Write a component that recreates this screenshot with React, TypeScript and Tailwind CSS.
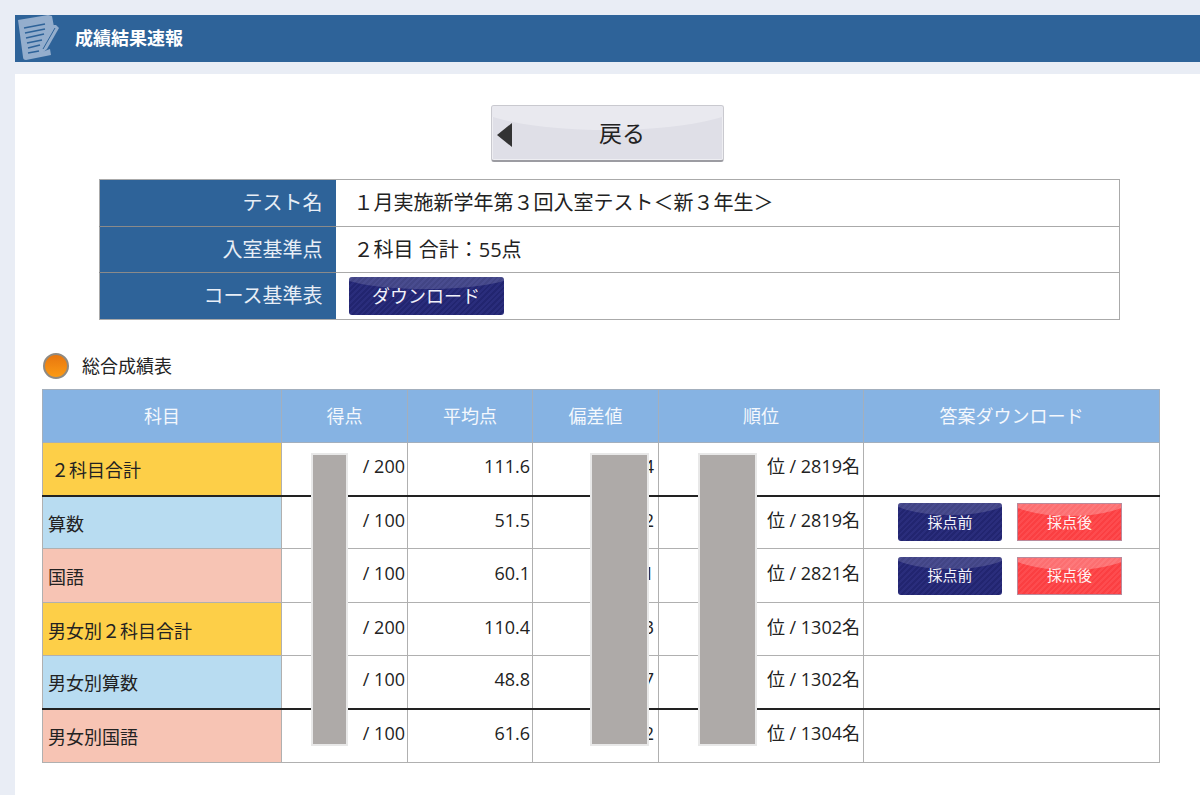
const font = "font-['Open_Sans','Noto_Sans_CJK_JP',sans-serif]";

const rows = [
  { name: "２科目合計", color: "bg-[#fdcf48]", score: "/ 200", avg: "111.6", dev: "4", rank: "位 / 2819名", line: "h-[53px]", pl: "pl-[8px]", dl: false },
  { name: "算数", color: "bg-[#b8dcf1]", score: "/ 100", avg: "51.5", dev: "2", rank: "位 / 2819名", line: "h-[53px] border-t-2", pl: "pl-[5px]", dl: true },
  { name: "国語", color: "bg-[#f7c4b4]", score: "/ 100", avg: "60.1", dev: "1", rank: "位 / 2821名", line: "h-[54px]", pl: "pl-[5px]", dl: true },
  { name: "男女別２科目合計", color: "bg-[#fdcf48]", score: "/ 200", avg: "110.4", dev: "3", rank: "位 / 1302名", line: "h-[53px]", pl: "pl-[5px]", dl: false },
  { name: "男女別算数", color: "bg-[#b8dcf1]", score: "/ 100", avg: "48.8", dev: "7", rank: "位 / 1302名", line: "h-[53px]", pl: "pl-[5px]", dl: false },
  { name: "男女別国語", color: "bg-[#f7c4b4]", score: "/ 100", avg: "61.6", dev: "2", rank: "位 / 1304名", line: "h-[54px] border-t-2", pl: "pl-[5px]", dl: false },
];

const headers = ["科目", "得点", "平均点", "偏差値", "順位", "答案ダウンロード"];

const Gloss = ({ color }: { color: string }) => (
  <span className={`absolute -left-[10%] -top-[24px] h-[36px] w-[120%] rounded-[50%] ${color}`} />
);

const NavyButton = ({ label, width }: { label: string; width: string }) => (
  <button className={`relative flex h-[38px] items-center justify-center overflow-hidden rounded-[3px] bg-[repeating-linear-gradient(135deg,#222570_0,#222570_2px,#2a2d7c_2px,#2a2d7c_4px)] text-[15px] text-[#f2f2fa] ${width}`}>
    <Gloss color="bg-white/15" />
    <span className="relative">{label}</span>
  </button>
);

const RedButton = ({ label }: { label: string }) => (
  <button className="relative flex h-[38px] w-[105px] items-center justify-center overflow-hidden border border-[#b98a9c] bg-[repeating-linear-gradient(135deg,#fb3f42_0,#fb3f42_2px,#fd4c4f_2px,#fd4c4f_4px)] text-[15px] text-[#fff2f2]">
    <Gloss color="bg-white/25" />
    <span className="relative">{label}</span>
  </button>
);

const NoteIcon = () => (
  <svg width="46" height="47" viewBox="0 0 46 47" className="shrink-0">
    <g fill="#94aecd">
      <path d="M3 5 L33 0 L37 1 L39 12 L27 37 L35 34 L36 40 L11 45 Q8 45 8 42 Z" />
      <path d="M44 8 L47 11 L35 32 L28 38 L29 29 L41 8 Z" transform="translate(-3 2)" />
    </g>
    <g stroke="#2e6399" strokeWidth="1.6">
      <line x1="9" y1="13" x2="30" y2="9" />
      <line x1="10" y1="18" x2="30" y2="14" />
      <line x1="11" y1="23" x2="29" y2="19" />
      <line x1="12" y1="28" x2="27" y2="25" />
      <line x1="13" y1="33" x2="25" y2="30" />
      <line x1="13" y1="38" x2="24" y2="36" />
    </g>
    <line x1="40" y1="13" x2="28" y2="34" stroke="#2e6399" strokeWidth="1" />
  </svg>
);

export default function App() {
  return (
    <div className={`h-[795px] overflow-hidden bg-[#e9edf5] pl-[15px] pt-[15px] ${font}`}>
      <div className="flex h-[47px] items-center overflow-hidden bg-[#2e6399]">
        <NoteIcon />
        <h1 className="ml-[14px] text-[18px] font-bold text-white">成績結果速報</h1>
      </div>

      <div className="mt-[12px] h-[721px] bg-white pt-[31px]">
        <button className="relative mx-auto flex h-[57px] w-[233px] items-center justify-center overflow-hidden rounded-[3px] border border-[#c9c9cf] border-b-2 border-b-[#9c9ca2] bg-[#dfdfe7] text-[23px] text-[#222] shadow-[inset_0_0_0_1px_#eeeef2]">
          <span className="absolute -left-[10%] -top-[36px] h-[60px] w-[120%] rounded-[50%] bg-[#e9e9ef]" />
          <span className="absolute left-[5px] top-[17px] h-0 w-0 border-y-[12px] border-r-[15px] border-y-transparent border-r-[#333]" />
          <span className="relative ml-[29px]">戻る</span>
        </button>

        <table className="ml-[84px] mt-[17px] w-[1021px] table-fixed border-collapse border border-[#aaa] text-[20px] text-[#222]">
          <colgroup>
            <col className="w-[236px]" />
            <col />
          </colgroup>
          <tbody>
            <tr className="h-[47px]">
              <th className="border-b border-[#8a8a8a] bg-[#2e6399] pr-[13px] text-right font-normal text-[#e8eef6]">テスト名</th>
              <td className="border-b border-[#aaa] pl-[18px]">１月実施新学年第３回入室テスト＜新３年生＞</td>
            </tr>
            <tr className="h-[46px]">
              <th className="border-b border-[#8a8a8a] bg-[#2e6399] pr-[13px] text-right font-normal text-[#e8eef6]">入室基準点</th>
              <td className="border-b border-[#aaa] pl-[18px]">２科目 合計：55点</td>
            </tr>
            <tr className="h-[47px]">
              <th className="bg-[#2e6399] pr-[13px] text-right font-normal text-[#e8eef6]">コース基準表</th>
              <td className="pl-[13px]">
                <NavyButton label="ダウンロード" width="w-[155px] text-[18px]" />
              </td>
            </tr>
          </tbody>
        </table>

        <div className="ml-[28px] mt-[33px] flex h-[26px] items-center text-[18px] text-[#222]">
          <span className="h-[26px] w-[26px] rounded-full border-2 border-[#8f8a82] bg-gradient-to-b from-[#e8760f] to-[#fb9a14]" />
          <span className="ml-[13px]">総合成績表</span>
        </div>

        <div className="relative ml-[27px] mt-[10px] w-[1118px]">
          <table className="w-full table-fixed border-collapse border border-[#b0b0b0] text-[18px] text-[#222]">
            <colgroup>
              <col className="w-[239px]" />
              <col className="w-[126px]" />
              <col className="w-[125px]" />
              <col className="w-[126px]" />
              <col className="w-[205px]" />
              <col />
            </colgroup>
            <thead>
              <tr className="h-[53px]">
                {headers.map((h) => (
                  <th key={h} className="border border-[#a3afbd] bg-[#86b3e3] text-center text-[18px] font-normal text-[#f4f8fd]">
                    {h}
                  </th>
                ))}
              </tr>
            </thead>
            <tbody>
              {rows.map((r) => (
                <tr key={r.name} className={r.line}>
                  <td className={`border border-[#b0b0b0] pt-[4px] ${r.color} ${r.pl}`}>{r.name}</td>
                  <td className="border border-[#b0b0b0] pb-[4px] pr-[2px] text-right">{r.score}</td>
                  <td className="border border-[#b0b0b0] pb-[4px] pr-[2px] text-right">{r.avg}</td>
                  <td className="border border-[#b0b0b0] pb-[4px] pr-[4px] text-right">{r.dev}</td>
                  <td className="border border-[#b0b0b0] pb-[4px] pr-[3px] text-right">{r.rank}</td>
                  <td className="border border-[#b0b0b0] align-middle">
                    {r.dl && (
                      <div className="flex justify-center gap-[15px] pr-[3px]">
                        <NavyButton label="採点前" width="w-[104px]" />
                        <RedButton label="採点後" />
                      </div>
                    )}
                  </td>
                </tr>
              ))}
            </tbody>
          </table>
          {/* 黒塗り */}
          <div className="absolute left-[269px] top-[64px] h-[293px] w-[37px] border-2 border-[#e8e8e8] bg-[#aeaaa8]" />
          <div className="absolute left-[548px] top-[64px] h-[293px] w-[59px] border-2 border-[#e8e8e8] bg-[#aeaaa8]" />
          <div className="absolute left-[656px] top-[64px] h-[293px] w-[59px] border-2 border-[#e8e8e8] bg-[#aeaaa8]" />
        </div>
      </div>
    </div>
  );
}
